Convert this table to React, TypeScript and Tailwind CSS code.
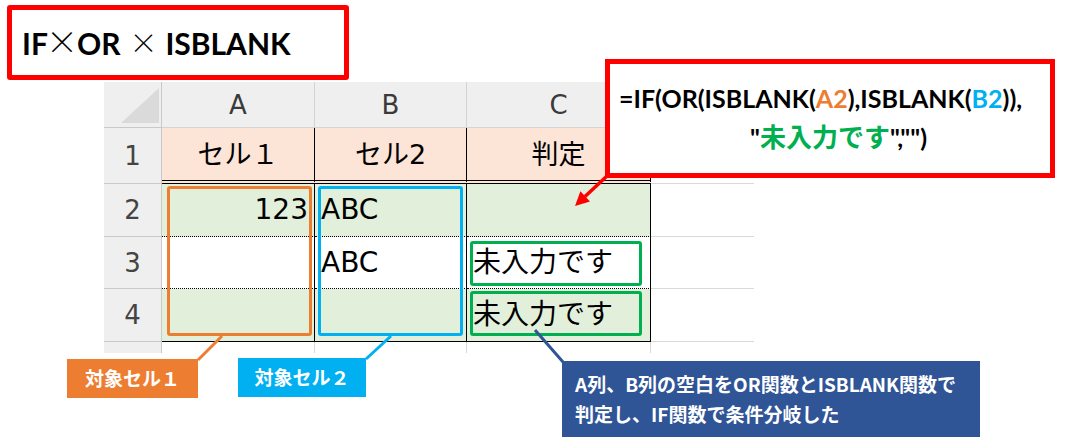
import React from "react";

export default function App() {
  return (
    <div className="relative w-[1071px] h-[448px] bg-white overflow-hidden">
      {/* Title */}
      <div className="ml-[7px] mt-[5px] w-[342px] h-[75px] box-border border-[5px] border-[#ff0000] rounded-[3px] flex items-center pl-[10px] font-['Lato',sans-serif] font-bold text-[30px] text-black leading-none">
        <span>IF</span>
        <span className="inline-block w-[32px] -ml-[2px] text-center font-['Noto_Sans_CJK_JP',sans-serif] font-light text-[32px] -translate-y-[3px]">×</span>
        <span className="-ml-[1px]">OR</span>
        <span className="inline-block w-[28px] ml-[9px] text-center font-['Noto_Sans_CJK_JP',sans-serif] font-light text-[28px] -translate-y-[1px]">×</span>
        <span className="ml-[8px]">ISBLANK</span>
      </div>

      {/* Sheet */}
      <div className="mt-[2px] ml-[104px] w-[650px] grid grid-cols-[58px_153px_152px_184px_103px] grid-rows-[46px_56px_53px_52px_53px_11px] font-['DejaVu_Sans','Noto_Sans_CJK_JP',sans-serif] leading-none">
        {/* header row */}
        <div className="relative bg-[#efefef] border-r border-b border-[#c9c9c9]">
          <svg className="absolute left-0 top-0" width="58" height="46">
            <polygon points="17,41 55,6 55,41" fill="#dadada" />
          </svg>
        </div>
        <div className="flex items-center justify-center bg-[#efefef] border-r border-b border-[#d4d4d4] text-[26px] text-[#3a3a3a]">A</div>
        <div className="flex items-center justify-center bg-[#efefef] border-r border-b border-[#d4d4d4] text-[26px] text-[#3a3a3a]">B</div>
        <div className="flex items-center justify-center bg-[#efefef] border-r border-b border-[#d4d4d4] text-[26px] text-[#3a3a3a]">C</div>
        <div className="bg-[#efefef] border-b border-[#d4d4d4]"></div>

        {/* row 1 */}
        <div className="flex items-center justify-center bg-[#efefef] border-r border-b border-[#c9c9c9] text-[26px] text-[#444444]">1</div>
        <div className="flex items-center justify-center bg-[#fce4d6] border-r border-black [border-bottom:4px_double_black] text-[27px] text-black">セル１</div>
        <div className="flex items-center justify-center bg-[#fce4d6] border-r border-black [border-bottom:4px_double_black] text-[27px] text-black">セル2</div>
        <div className="flex items-center justify-center bg-[#fce4d6] border-r border-black [border-bottom:4px_double_black] text-[27px] text-black">判定</div>
        <div className="bg-white border-b border-[#d9d9d9]"></div>

        {/* row 2 */}
        <div className="flex items-center justify-center bg-[#efefef] border-r border-b border-[#c9c9c9] text-[26px] text-[#444444]">2</div>
        <div className="flex items-center justify-end pr-[6px] bg-[#e2efda] border-r border-black [border-bottom:1px_dotted_black] text-[28px] text-black">123</div>
        <div className="flex items-center pl-[6px] bg-[#e2efda] border-r border-black [border-bottom:1px_dotted_black] text-[28px] text-black">ABC</div>
        <div className="bg-[#e2efda] border-r border-black [border-bottom:1px_dotted_black]"></div>
        <div className="bg-white border-b border-[#d9d9d9]"></div>

        {/* row 3 */}
        <div className="flex items-center justify-center bg-[#efefef] border-r border-b border-[#c9c9c9] text-[26px] text-[#444444]">3</div>
        <div className="bg-white border-r border-black [border-bottom:1px_dotted_black]"></div>
        <div className="flex items-center pl-[6px] bg-white border-r border-black [border-bottom:1px_dotted_black] text-[28px] text-black">ABC</div>
        <div className="flex items-center pl-[6px] bg-white border-r border-black [border-bottom:1px_dotted_black] text-[28px] text-black">未入力です</div>
        <div className="bg-white border-b border-[#d9d9d9]"></div>

        {/* row 4 */}
        <div className="flex items-center justify-center bg-[#efefef] border-r border-b border-[#c9c9c9] text-[26px] text-[#444444]">4</div>
        <div className="bg-[#e2efda] border-r border-b border-black"></div>
        <div className="bg-[#e2efda] border-r border-b border-black"></div>
        <div className="flex items-center pl-[6px] bg-[#e2efda] border-r border-b border-black text-[28px] text-black">未入力です</div>
        <div className="bg-white border-b border-[#d9d9d9]"></div>

        {/* partial row */}
        <div className="bg-[#efefef] border-r border-[#c9c9c9]"></div>
        <div className="bg-white border-r border-[#d9d9d9]"></div>
        <div className="bg-white border-r border-[#d9d9d9]"></div>
        <div className="bg-white border-r border-[#d9d9d9]"></div>
        <div className="bg-white"></div>
      </div>

      {/* highlight boxes */}
      <div className="absolute left-[167px] top-[186px] w-[145px] h-[150px] border-[3px] border-[#ed7d31] rounded-[3px]"></div>
      <div className="absolute left-[318px] top-[186px] w-[145px] h-[150px] border-[3px] border-[#00b0f0] rounded-[3px]"></div>
      <div className="absolute left-[470px] top-[241px] w-[172px] h-[45px] border-[3px] border-[#00b050] rounded-[3px]"></div>
      <div className="absolute left-[470px] top-[291px] w-[172px] h-[45px] border-[3px] border-[#00b050] rounded-[3px]"></div>

      {/* connector lines */}
      <svg className="absolute left-0 top-0 pointer-events-none" width="1071" height="448">
        <line x1="198" y1="360" x2="222" y2="336" stroke="#ed7d31" strokeWidth="3" />
        <line x1="366" y1="359" x2="391" y2="336" stroke="#00b0f0" strokeWidth="3" />
        <line x1="535" y1="330" x2="563" y2="362" stroke="#2f5597" strokeWidth="3" />
        <line x1="607" y1="176" x2="585" y2="196.5" stroke="#ff0000" strokeWidth="3.5" />
        <polygon points="575,206 590,201.5 580.4,191.3" fill="#ff0000" />
      </svg>

      {/* formula callout */}
      <div className="absolute left-[605px] top-[59px] w-[450px] h-[119px] box-border border-[5px] border-[#ff0000] bg-white pt-[16px] pl-[9px] font-['Lato',sans-serif] font-bold text-[25px] leading-[37px] text-black">
        <div className="whitespace-nowrap">
          =IF(OR(ISBLANK(<span className="text-[#ed7d31]">A2</span>),ISBLANK(<span className="text-[#00b0f0]">B2</span>)),
        </div>
        <div className="whitespace-nowrap pl-[131px]">
          {'"'}<span className="font-['Noto_Sans_CJK_JP',sans-serif] text-[26px] text-[#00b050]">未入力です</span>{'",""\u200B)'}
        </div>
      </div>

      {/* labels */}
      <div className="absolute left-[67px] top-[359px] w-[131px] h-[39px] bg-[#ed7d31] flex items-center justify-center font-['Noto_Sans_CJK_JP',sans-serif] font-bold text-[19px] text-white">
        対象セル１
      </div>
      <div className="absolute left-[238px] top-[358px] w-[128px] h-[39px] bg-[#00b0f0] flex items-center justify-center font-['Noto_Sans_CJK_JP',sans-serif] font-bold text-[19px] text-white">
        対象セル２
      </div>
      <div className="absolute left-[562px] top-[361px] w-[418px] h-[76px] bg-[#2f5597] pt-[8px] pl-[13px] font-['Noto_Sans_CJK_JP',sans-serif] font-bold text-[19px] leading-[30px] text-white whitespace-nowrap">
        <div>A列、B列の空白をOR関数とISBLANK関数で</div>
        <div>判定し、IF関数で条件分岐した</div>
      </div>
    </div>
  );
}
